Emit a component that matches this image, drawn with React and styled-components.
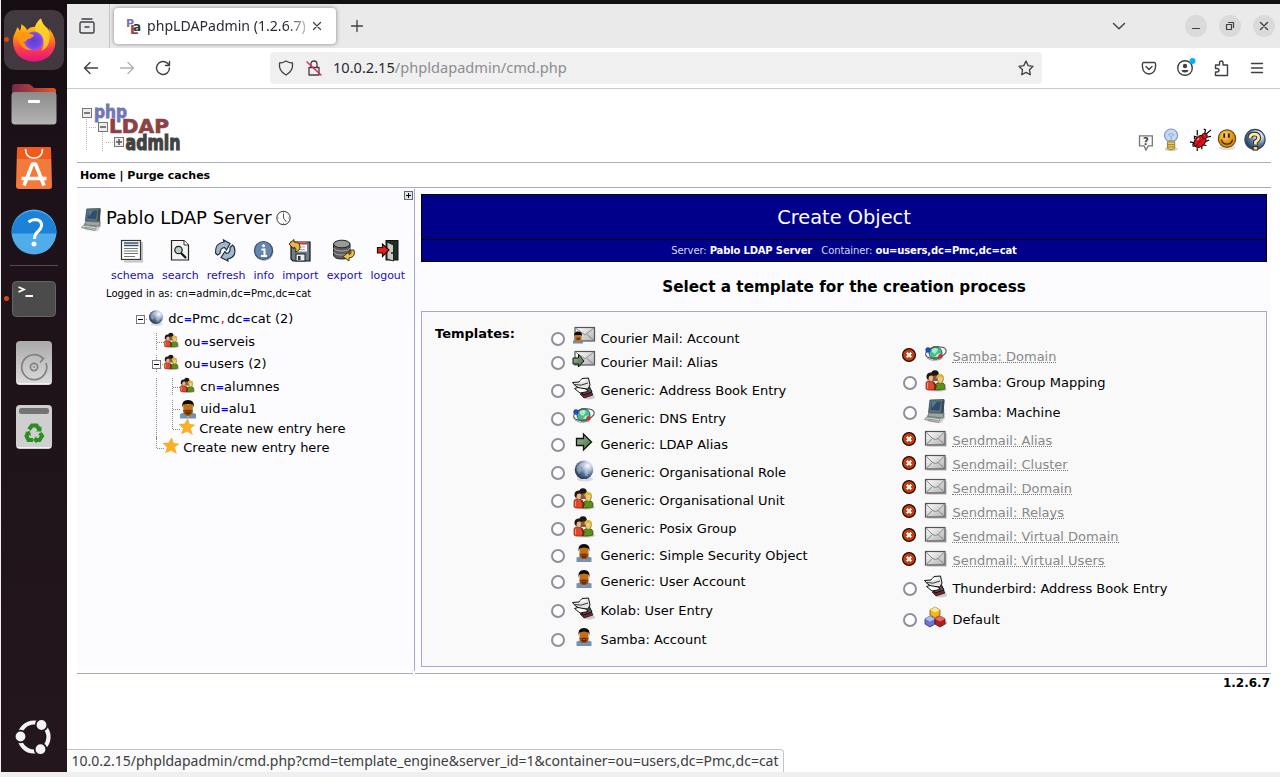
import React from 'react';
import styled, { createGlobalStyle } from 'styled-components';

const UI = '"Noto Sans", "Open Sans", sans-serif';
const LINE = '#a9a9cf';

const Global = createGlobalStyle`
  * { box-sizing: border-box; }
  body { margin: 0; background: #efefef; font-family: "DejaVu Sans", sans-serif; color: #000; overflow: hidden; }
  svg { display: block; flex: none; overflow: visible; }
`;

/* ---------- shell ---------- */
const Desktop = styled.div`
  width: 1280px; height: 777px; padding-left: 1px; background: #efefef;
`;
const Screen = styled.div`
  display: flex; height: 772px; background: #fff;
`;
const Dock = styled.nav`
  width: 66px; flex: none; display: flex; flex-direction: column; align-items: center;
  padding-top: 8px; background: linear-gradient(#160d13, #1d1219 25%, #23161d);
`;
const Slot = styled.div`
  position: relative; width: 66px; height: 64px; flex: none;
  display: flex; align-items: center; justify-content: center;
`;
const ActiveTile = styled.div`
  width: 60px; height: 60px; border-radius: 11px; background: #42383f;
  display: flex; align-items: center; justify-content: center;
`;
const RunDot = styled.i`
  position: absolute; left: 3px; top: 29px; width: 5px; height: 5px; border-radius: 50%; background: #d9480f;
`;
const DockRule = styled.div`width: 48px; height: 1px; margin: 1px 0; background: #56494f;`;
const DockEnd = styled.div`margin-top: auto; margin-bottom: 16px;`;

const Browser = styled.div`
  position: relative; flex: 1; min-width: 0; border-top: 4px solid #111013; background: #fff;
`;
const TabBar = styled.div`
  display: flex; align-items: center; height: 44px; background: #eaeaea; font-family: ${UI};
`;
const TabOverview = styled.div`
  width: 43px; height: 44px; border-right: 1px solid #c6c6c6; display: flex; align-items: center; padding-left: 12px;
`;
const Tab = styled.div`
  display: flex; align-items: center; width: 222px; height: 36px; margin-left: 3.5px; padding-left: 12px;
  background: #fff; border-radius: 4px; box-shadow: 0 0 4px rgba(0, 0, 0, .45);
`;
const TabTitle = styled.span`
  width: 158px; margin: 0 7px 0 6.5px; font-size: 14.1px; line-height: 20px; padding-bottom: 1px; white-space: nowrap; overflow: hidden; color: #2b2a33;
  mask-image: linear-gradient(90deg, #000 88%, rgba(0,0,0,.35));
`;
const NewTab = styled.div`margin-left: 15px;`;
const WindowControls = styled.div`
  margin-left: auto; display: flex; align-items: center; gap: 12px; padding-right: 5px;
`;
const ListTabs = styled.div`margin-right: 47px;`;
const RoundButton = styled.div`
  width: 22px; height: 22px; border-radius: 50%; background: #dadada;
  display: flex; align-items: center; justify-content: center;
`;
const NavBar = styled.div`
  display: flex; align-items: center; height: 41px; padding: 0 15px 1px 16px; border-bottom: 1px solid #c9c9c9; background: #fff;
`;
const NavButtons = styled.div`display: flex; gap: 20px; width: 187px;`;
const UrlBar = styled.div`
  display: flex; align-items: center; width: 772px; height: 32px; padding: 0 8px; background: #f0f0f0; border-radius: 4px;
`;
const Url = styled.span`
  margin-left: 11px; padding-bottom: 2px; flex: 1; font: 14.6px ${UI}; color: #8d8d93; white-space: nowrap;
  b { font-weight: 400; color: #2b2a33; }
`;
const UrlIcons = styled.div`display: flex; gap: 12px;`;
const ToolIcons = styled.div`margin-left: auto; display: flex; gap: 20px;`;
const StatusPopup = styled.div`
  position: absolute; left: 0; bottom: 0; width: 717px; height: 23px; padding-left: 4.5px;
  background: #fafafa; border: 1px solid #c4c4c4; border-width: 1px 1px 0 0; border-radius: 0 4px 0 0;
  font: 14px/22px ${UI}; color: #3d3d42; white-space: nowrap;
`;

/* ---------- phpLDAPadmin page ---------- */
const Page = styled.div`padding: 0 9px 0 10px;`;
const Header = styled.header`
  display: flex; justify-content: space-between; align-items: flex-start; height: 74px;
  padding: 13px 5.5px 0 4px; border-bottom: 1px solid ${LINE};
`;
const HeaderIcons = styled.div`display: flex; gap: 5.5px; margin-top: 27px;`;
const MenuBar = styled.div`
  height: 25px; padding-left: 3px; border-bottom: 1px solid ${LINE};
  font-weight: 700; font-size: 11px; line-height: 25px;
`;
const Main = styled.div`display: flex; height: 483px;`;
const TreePane = styled.aside`
  width: 338px; border-right: 1px solid ${LINE}; margin-top: 1px; background: #fcfcfe;
`;
const PaneToggle = styled.div`display: flex; justify-content: flex-end; padding: 2px 1px 0 0; height: 17px;`;
const ServerRow = styled.div`display: flex; align-items: center; height: 26px; padding-left: 4px;`;
const ServerName = styled.span`margin: -3px 4.500px 0 2px; font-size: 18px; line-height: 26px; white-space: nowrap;`;
const Actions = styled.div`display: flex; gap: 8.1px; padding-left: 34px; margin-top: 7px;`;
const Action = styled.a`
  display: flex; flex-direction: column; align-items: center; gap: 6px;
  font-size: 11px; line-height: 14px; color: #1b10b4;
  svg { margin: 0 -4px; }
`;
const LoggedIn = styled.div`padding-left: 29px; margin-top: 4px; font-size: 10px; line-height: 14px;`;
const Tree = styled.div`padding-left: 55px; margin-top: 9px;`;
const Node = styled.div`
  display: flex; height: 18px; margin-top: ${p => p.$gap}px; font-size: 13px; line-height: 18px; white-space: pre;
`;
const NodeIcon = styled.div`width: 17px; margin: -1px ${p => (p.$tight ? 3.3 : 4.3)}px 0 -1px;`;
const Eq = styled.b`font-size: 10px; color: #0000ff;`;
const Comma = styled.span`color: #f00; margin: 0 2px 0 1px;`;

const Content = styled.main`
  flex: 1; margin-top: 2px; padding: 4px 4px 0 6px; background: #fcfcfe;
`;
const TitleBlock = styled.div`border: 1px solid #000; background: #00008b; color: #fff; text-align: center;`;
const Title = styled.div`height: 45px; border-bottom: 1px solid #000; font-size: 19.4px; line-height: 45px;`;
const SubTitle = styled.div`
  height: 21px; font-size: 10px; line-height: 21px; white-space: pre; color: #d8d8f4; letter-spacing: -.1px;
  b { color: #fff; letter-spacing: -.16px; }
`;
const Heading = styled.h3`margin: 0; height: 49px; font-size: 15.25px; line-height: 51px; text-align: center;`;
const TemplateForm = styled.section`
  display: grid; grid-template-columns: 116px 352px 1fr; height: 356px; padding-left: 13px;
  border: 1px solid ${LINE}; background: #f9f9f9;
`;
const FormLabel = styled.b`padding-top: 12px; font-size: 13px; line-height: 20px;`;
const Option = styled.div`
  display: flex; align-items: flex-end; height: ${p => p.$h}px; font-size: 13px; line-height: 20px; white-space: nowrap;
`;
const Mark = styled.div`width: ${p => (p.$off ? 22 : 21)}px; margin: 0 0 ${p => (p.$off ? 5 : 3)}px ${p => (p.$off ? -1 : 0)}px;`;
const Radio = styled.div`width: 14px; height: 14px; border-radius: 50%; border: 2px solid #8f8f9d; background: #fff;`;
const OptionIcon = styled.div`width: 24px; height: 24px; margin: 0 4.4px 0 0;`;
const Disabled = styled.span`color: #888; line-height: 16px; margin-bottom: 4px; border-bottom: 1px dotted #777; height: 14px;`;
const FootLine = styled.div`
  display: flex; gap: 2px; height: 1px; margin-top: 2px;
  &::before { content: ''; width: 336px; background: ${LINE}; }
  &::after { content: ''; flex: 1; background: ${LINE}; }
`;
const Version = styled.div`padding-right: 1px; text-align: right; font-size: 12px; font-weight: 700; line-height: 18px;`;
const HiddenSvg = styled.svg`position: absolute;`;

/* ---------- shared gradients ---------- */
const Defs = () => (
  <HiddenSvg width="0" height="0">
    <defs>
      <linearGradient id="ff" x1="0" y1="0" x2="0" y2="1"><stop offset="0" stopColor="#ffe226" /><stop offset=".4" stopColor="#ff980e" /><stop offset=".7" stopColor="#ff3c4b" /><stop offset="1" stopColor="#e3147d" /></linearGradient>
      <radialGradient id="ffp"><stop offset="0" stopColor="#5b3fd0" /><stop offset=".7" stopColor="#7a45e8" /><stop offset="1" stopColor="#9059ff" /></radialGradient>
      <linearGradient id="grey" x1="0" y1="0" x2="0" y2="1"><stop offset="0" stopColor="#8b8b8b" /><stop offset="1" stopColor="#b5b5b5" /></linearGradient>
      <linearGradient id="fold" x1="0" y1="0" x2="1" y2="0"><stop offset="0" stopColor="#75284f" /><stop offset="1" stopColor="#e9541f" /></linearGradient>
      <linearGradient id="light" x1="0" y1="0" x2="0" y2="1"><stop offset="0" stopColor="#aaa" /><stop offset="1" stopColor="#dcdcdc" /></linearGradient>
      <radialGradient id="globe" cx=".7" cy=".28" r=".8"><stop offset="0" stopColor="#fff" /><stop offset=".3" stopColor="#b9c8de" /><stop offset=".6" stopColor="#5a7499" /><stop offset="1" stopColor="#243650" /></radialGradient>
      <linearGradient id="env" x1="0" y1="0" x2="1" y2="1"><stop offset="0" stopColor="#fff" /><stop offset="1" stopColor="#b0b0b0" /></linearGradient>
      <radialGradient id="smile" cx=".4" cy=".3"><stop offset="0" stopColor="#ffd75e" /><stop offset="1" stopColor="#d98a10" /></radialGradient>
      <linearGradient id="green" x1="0" y1="0" x2="1" y2="1"><stop offset="0" stopColor="#a5bd9e" /><stop offset="1" stopColor="#3e6a35" /></linearGradient>
    </defs>
  </HiddenSvg>
);

/* ---------- dock icons ---------- */
const Firefox = () => (
  <svg width="44" height="44" viewBox="0 0 44 44">
    <path d="M3 15 5.500 9 8 13Q10 7 9 6Q14 9 15 12Q19 8 24 9L23 9Q25 3 29 .500Q30 6 35 10Q37 12 38 14L37 10Q45 21 43 28Q39 43 22 43.500Q5 43 1.500 28Q0 20 3 15Z" fill="url(#ff)" />
    <circle cx="22" cy="23" r="9.500" fill="url(#ffp)" />
    <path d="M5 14Q13 13 15 15Q20 16 22 17Q21 20 16 21Q14 24 11 24Q14 30 20 32Q12 33 8 26Q5 20 5 14Z" fill="#ff980e" />
    <path d="M23 9Q25 3 29 .500Q30 6 35 10Q39 16 37 24Q35 31 29 33Q33 27 31 20Q29 15 23 13Z" fill="#ffd72e" opacity=".8" />
  </svg>
);
const Files = () => (
  <svg width="46" height="42" viewBox="0 0 46 42">
    <path d="M1 12V4Q1 1 4 1H17Q19 1 21 3L23 5H42Q45 5 45 8V16H1Z" fill="url(#fold)" />
    <rect x=".500" y="9" width="45" height="32.500" rx="3.500" fill="url(#grey)" />
    <rect x="17" y="17" width="12" height="3" rx="1" fill="#fff" />
  </svg>
);
const Software = () => (
  <svg width="36" height="42" viewBox="0 0 36 42">
    <path d="M3 0H33Q35 0 35 2L36 39Q36 42 33 42H3Q0 42 0 39L1 2Q1 0 3 0Z" fill="#f47a3c" />
    <path d="M3 0H33Q35 0 35 2V12H1V2Q1 0 3 0Z" fill="#f05a1c" />
    <path d="M9.500 2Q9.500 11 18 11Q26.500 11 26.500 2" fill="none" stroke="#fff" strokeWidth="1.600" />
    <path d="M8 38.500 16.500 17H19.500L28 38.500M5.500 31.500H30.500" fill="none" stroke="#fff" strokeWidth="3.600" strokeLinejoin="bevel" />
  </svg>
);
const Help = () => (
  <svg width="46" height="46" viewBox="0 0 46 46">
    <circle cx="23" cy="23" r="22.500" fill="#51ade9" />
    <path d="M.500 24.500A22.500 22.500 0 1 1 45.500 24.500Z" fill="#1c82d8" />
    <path d="M17.500 13Q21 10.500 24.500 10.500Q31 11 30.500 17Q30 20 26.500 23Q23.500 25.500 23.500 30" fill="none" stroke="#fff" strokeWidth="3" />
    <circle cx="23" cy="35" r="2.500" fill="#fff" />
  </svg>
);
const Terminal = () => (
  <svg width="44" height="36" viewBox="0 0 44 36">
    <rect x=".500" y=".500" width="43" height="35" rx="4" fill="#4b4b4b" stroke="#656565" />
    <path d="M6.500 6 12 8.500 6.500 11M13.500 15H21" fill="none" stroke="#fff" strokeWidth="1.800" />
  </svg>
);
const Disk = () => (
  <svg width="36" height="44" viewBox="0 0 36 44">
    <rect width="36" height="44" rx="4" fill="url(#light)" /><path d="M1 42.500H35" stroke="#f2f2f2" />
    <path d="M30 22A12.500 12.500 0 1 1 23.500 14.800L27.500 17.500L24 21.500" fill="none" stroke="#818181" strokeWidth="1.700" />
    <circle cx="18" cy="26" r="3.600" fill="none" stroke="#818181" strokeWidth="1.700" /><circle cx="18" cy="26" r=".9" fill="#818181" />
  </svg>
);
const Trash = () => (
  <svg width="36" height="44" viewBox="0 0 36 44">
    <rect width="36" height="44" rx="4" fill="#cfcfcf" /><path d="M1 42.500H35" stroke="#f2f2f2" />
    <rect x="3" y="3" width="30" height="6" rx="2.500" fill="#737373" />
    <g fill="none" stroke="#2b8e22" strokeWidth="4">
      <path d="M13 24.500 16 20.500H20.500L23 24" /><path d="M24 28 26 31 23.500 35H19" /><path d="M17 35H12.500L10.500 31 12 28" />
    </g>
    <path d="M25.500 21V26.500H20ZM20.500 31V38.500L17 35ZM9 27 14 26 15 31Z" fill="#2b8e22" />
  </svg>
);
const UbuntuLogo = () => (
  <svg width="38" height="38" viewBox="-19 -19 38 38">
    <circle r="14.500" fill="none" stroke="#f3f3f3" strokeWidth="4.200" />
    {[[-13.5, -0.5], [7.5, -12], [6.5, 12.2]].map(([x, y]) => <circle key={y} cx={x} cy={y} r="5.800" fill="#f3f3f3" stroke="#23161d" strokeWidth="1.800" />)}
  </svg>
);

/* ---------- browser icons ---------- */
const Stroke = ({ w = 16, d, c = '#3f3f46', sw = 1.4, children }) => (
  <svg width={w} height={w} viewBox={`0 0 ${w} ${w}`} fill="none" stroke={c} strokeWidth={sw} strokeLinecap="round" strokeLinejoin="round"><path d={d} />{children}</svg>
);
const Favicon = () => (
  <svg width="15" height="16" viewBox="0 0 15 16" fontFamily="DejaVu Sans" fontWeight="700">
    <text x="0" y="9" fontSize="11" fill="#7474ad">P</text><text x="4" y="16" fontSize="13" fill="#94464a">L</text><text x="7" y="13" fontSize="12" fill="#333">a</text>
  </svg>
);

/* ---------- page artwork ---------- */
const Box = ({ x, y, plus }) => (
  <g transform={`translate(${x} ${y})`}><rect x=".500" y=".500" width="9" height="9" fill="#eee" stroke="#777" /><path d={plus ? 'M2 5H8M5 2V8' : 'M2 5H8'} stroke="#555" strokeWidth="1.500" /></g>
);
const Logo = () => (
  <svg width="100" height="50" viewBox="0 0 100 50" fontFamily="DejaVu Sans" fontWeight="700">
    <path d="M5.500 17V49M21.500 30V49M8 25.500H16M25 40.500H33" stroke="#bbb" strokeDasharray="1 1" fill="none" />
    <Box x="1" y="6" /><Box x="17" y="20" /><Box x="33" y="35" plus />
    <text x="13" y="15.500" fontSize="17.500" fill="#7476b4" textLength="33" lengthAdjust="spacingAndGlyphs" stroke="#7476b4" strokeWidth=".8">php</text>
    <text x="28" y="31" fontSize="19.500" fill="#8d4144" textLength="60" lengthAdjust="spacingAndGlyphs" stroke="#8d4144" strokeWidth=".7">LDAP</text>
    <text x="44.500" y="48" fontSize="21.500" fill="#414141" textLength="55" lengthAdjust="spacingAndGlyphs" stroke="#414141" strokeWidth="1.200">admin</text>
  </svg>
);
const I = ({ s = 22, children }) => <svg width={s} height={s} viewBox="0 0 24 24">{children}</svg>;

const Bubble = () => (
  <I><path d="M6 7.500H20V18.500H15.500L13 23 11 18.500H6Z" fill="#fafafa" stroke="#777" strokeWidth="1.400" /><text x="9.800" y="17" fontSize="11" fontWeight="700" fill="#444" fontFamily="DejaVu Sans">?</text></I>
);
const Bulb = () => (
  <I><ellipse cx="11" cy="22" rx="7" ry="2" fill="#ccc" /><path d="M7 13Q2.500 9 4.500 4Q7 0 11 0Q15 0 17.500 4Q19.500 9 15 13Z" fill="#c7d8f2" stroke="#7b98cb" strokeWidth="1.300" /><path d="M11 13V9L8 6Q11 4 14 6L11 9" fill="none" stroke="#8fa4cc" /><path d="M7 14H15V21L12 22.500H10L7 21Z" fill="#e8c55e" stroke="#a07a22" /><path d="M7 17H15M7 19.500H15" stroke="#a07a22" /></I>
);
const Bug = () => (
  <I><path d="M1 14 5 15 4 18M4 19 8 18M9 24V21M14 22V17L19 18M6 11V8L9 9M9 7V1M17 6 18 1 16 0M18 6 24 1M19 9 24 8M17 14 22 12" fill="none" stroke="#000" strokeWidth="1.300" /><ellipse cx="12" cy="13.500" rx="7.500" ry="5.500" transform="rotate(-45 12 13.500)" fill="#df1014" stroke="#000" /><circle cx="17" cy="7.500" r="3" fill="#e01318" stroke="#000" strokeWidth=".8" /><path d="M7 19 16 9" stroke="#500" /><path d="M9 12 11 10" stroke="#ff8a8a" strokeWidth="1.500" /></I>
);
const Smiley = () => (
  <I><ellipse cx="12" cy="20.500" rx="9" ry="2.500" fill="#ddd" /><circle cx="12" cy="10.500" r="9.500" fill="url(#smile)" stroke="#6d470a" strokeWidth="1.200" /><path d="M9 5V9.500M14 5V9.500" stroke="#2b1b00" strokeWidth="2" /><path d="M6 11.500Q7 16.500 12 16.500Q17 16.500 18 11.500" fill="none" stroke="#3d2600" strokeWidth="1.400" /></I>
);
const HelpBall = () => (
  <I><circle cx="12" cy="11.500" r="11" fill="url(#globe)" stroke="#2f4860" strokeWidth="1.300" /><path d="M6.500 10Q6.500 5.500 11 5.500Q16 5.500 16 9.500Q16 12 12.500 14V17" fill="none" stroke="#222" strokeWidth="5" /><path d="M6.500 10Q6.500 5.500 11 5.500Q16 5.500 16 9.500Q16 12 12.500 14V17" fill="none" stroke="#ffe9a0" strokeWidth="3" /><rect x="10" y="19" width="5" height="4" fill="#f6d877" stroke="#222" /></I>
);
const Computer = ({ s = 24 }) => (
  <I s={s}><path d="M4 23 17 24 21 19 20 6Z" fill="#bcbcb6" opacity=".7" /><path d="M6 1 20 .500 19 14 4.500 13.500Z" fill="#5d727b" stroke="#3c4b51" strokeWidth=".8" /><path d="M7.500 3 17 2.500 15.500 11.500 6.500 11Z" fill="#2f4d6c" /><path d="M7.500 3 13 2.700 8 9Z" fill="#58789a" /><path d="M18 2 20.500 1 19.500 14 17 13.500Z" fill="#3b4a50" /><path d="M5 14 20 14.500 19 19 3.500 17.500Z" fill="#9aa7a7" stroke="#56635f" strokeWidth=".8" /><path d="M2.500 18 16 19.500 14.500 23.500 .500 20.500Z" fill="#d6dad3" stroke="#6f7a76" strokeWidth=".8" /><path d="M3 20 14 21.500" stroke="#87918c" /></I>
);
const Clock = () => (
  <svg width="15" height="15" viewBox="0 0 15 15"><circle cx="7.500" cy="6" r="6.700" fill="#fff" stroke="#333" /><path d="M7.500 1.500V6L10.500 10" fill="none" stroke="#555" /><path d="M7.500 0V1.500M7.500 10.500V12M1.500 6H3M12 6H13.500" stroke="#999" /></svg>
);
const Schema = () => (
  <I s={24}><path d="M4 22.500H22V3" stroke="#c4c4c4" strokeWidth="2" fill="none" /><rect x="1.500" y="1.500" width="19" height="19" fill="#fff" stroke="#333" strokeWidth="1.200" /><path d="M4 4H18.500M4 6.500H18.500" stroke="#37536e" strokeWidth="1.300" /><path d="M4 9.500H18M4 12H18M4 14.500H18M4 17.500H15" stroke="#777" /></I>
);
const Search = () => (
  <I s={24}><path d="M3.500 1.500H16L20.500 6V21H3.500Z" fill="#f3f3f1" stroke="#222" strokeWidth="1.200" /><path d="M16 1.500V6H20.500" fill="#fff" stroke="#333" /><circle cx="10.500" cy="11" r="3.700" fill="#b7d0c7" stroke="#222" strokeWidth="1.200" /><path d="M13 14 18 19" stroke="#111" strokeWidth="2.200" /></I>
);
const Refresh = () => (
  <I s={24}><path d="M1.500 14Q1 4 10 3L9.500 1 16 4.500 12.500 11 10.500 8.500Q6 9 6 14.500L3.500 16Z" fill="#a4b8cd" stroke="#1d2d3c" strokeWidth="1.200" /><path d="M20 7.500Q23.500 18 13.500 20L14 22 7 18.500 11 12.500 12.500 14.500Q16.500 14 16 8.500L18.500 6Z" fill="#a4b8cd" stroke="#1d2d3c" strokeWidth="1.200" /></I>
);
const Info = () => (
  <I s={24}><circle cx="12" cy="12.500" r="9.500" fill="#bbb" /><circle cx="11.500" cy="11.500" r="9" fill="#6486af" stroke="#3a4f6b" strokeWidth="1.200" /><path d="M9.500 10.500H12.500V16.500M9 17H15" stroke="#fff" strokeWidth="2" fill="none" /><circle cx="11.500" cy="6.800" r="1.500" fill="#fff" /></I>
);
const Import = () => (
  <I s={24}><path d="M3 3H22V22H5L3 20Z" fill="#6c7d8d" stroke="#111" strokeWidth="1.200" /><rect x="7" y="3.500" width="12" height="9" fill="#fff" /><path d="M7 4.500H19" stroke="#c33" strokeWidth="2" /><path d="M9 8H17M9 10.500H17" stroke="#aaa" /><rect x="8" y="15" width="9" height="7" fill="#eee" stroke="#222" /><rect x="10" y="17" width="2.500" height="4" fill="#334" /><path d="M1 5 6 .500V3Q12 3 12 8Q12 12 7 13Q9 9 6 8V10Z" fill="#eab544" stroke="#3b2a00" /></I>
);
const Export = () => (
  <I s={24}><path d="M1.500 5V16Q2 20 10 20Q18 20 18 16V5Z" fill="#5b5b5b" stroke="#222" /><path d="M1.500 9Q3 12 10 12Q17 12 18 9M1.500 13Q3 16 10 16Q17 16 18 13" fill="none" stroke="#aaa" /><ellipse cx="9.800" cy="5" rx="8.200" ry="3.800" fill="#999" stroke="#222" /><path d="M22 11Q24 18 17 19V22L11 17.500 17 13V15.500Q20 15 18.500 11Z" fill="#eebf50" stroke="#4b3600" /></I>
);
const Logout = () => (
  <I s={24}><rect x="10" y="1.500" width="12" height="19.500" fill="#1c3025" stroke="#111" /><path d="M11 3 17.500 6V22L11 20Z" fill="#c8cac4" stroke="#222" /><circle cx="16" cy="14" r="1" fill="#222" /><path d="M1.500 8.500H6.500V5L13 11 6.500 17.500V14H1.500Z" fill="#d8241f" stroke="#320000" strokeWidth="1.200" /></I>
);
const Globe = ({ s = 24 }) => (
  <I s={s}><ellipse cx="13" cy="20" rx="8" ry="2.500" fill="#ccc" opacity=".7" /><circle cx="12" cy="10.800" r="9.300" fill="url(#globe)" /><path d="M5 7Q8 3.500 11 4L11.500 6 8.500 8 9.500 12 7 15 4.500 11ZM12.500 12 17 12.500 15.500 17 13 17Z" fill="#e7eef5" opacity=".35" /></I>
);
const Group = ({ s = 24 }) => (
  <I s={s}>
    <ellipse cx="14" cy="20.500" rx="9" ry="2" fill="#ccc" />
    <circle cx="11" cy="5" r="3.800" fill="#181818" /><path d="M9 6.500H14V12H9Z" fill="#8a5a38" />
    <path d="M2 20V13.500Q3 11.500 6 12Q10.500 12 11 15V21H4Z" fill="#dc4a2b" stroke="#7e1d0c" strokeWidth=".7" />
    <path d="M3.500 7.500Q3.500 5 6.500 5Q9.500 5.500 9.500 8.500Q9.500 12 7 13Q4 12 3.500 7.500Z" fill="#e9b98c" stroke="#51301a" strokeWidth=".6" /><path d="M2.500 9Q2 3.800 6.500 3.600Q10 4 9.800 6.800Q6.500 5.800 5 7.500L4 11Z" fill="#24150d" />
    <path d="M11 21V16Q12 13.500 16 13.500Q20.500 13.500 21 16.500V20Q17 21.500 11 21Z" fill="#5d9016" stroke="#2b480a" strokeWidth=".7" />
    <path d="M13 9Q13 6.500 16 6.500Q19.500 6.500 19.500 9.500Q19 14 16.500 14.500Q13.500 14 13 9Z" fill="#efc87e" stroke="#6b5014" strokeWidth=".6" /><path d="M12.300 9.500Q12 5.200 16 5Q20.500 5.200 19.800 9.500L18.500 7.800 14.500 8Z" fill="#d9b730" />
    <path d="M3.500 14V19.500" stroke="#ff8d6d" /><path d="M9.500 13.500 12 17 10.500 21" stroke="#6c1f1c" strokeWidth="1.500" fill="none" />
  </I>
);
const User = ({ s = 24 }) => (
  <I s={s}><path d="M4.500 20V15.500Q7 14.500 9 14.500H15Q17 14.500 19.500 15.500V20Z" fill="#7391b4" /><path d="M8.500 15.500 12 18.500 15.500 15.500Z" fill="#b9cade" /><path d="M7.500 6H16.500V13Q16 17 12 17.500Q8 17 7.500 13Z" fill="#c46f14" /><path d="M6.500 9.500Q5.500 2 12 2Q18.500 2 17.500 9.500L16.500 6.500Q12 5 7.500 6.500Z" fill="#0d0a08" /><path d="M7.500 12 10 11.500H14L16.500 12Q16.500 16.500 12 17.500Q7.500 16.500 7.500 12Z" fill="#8d4c0c" /><rect x="10" y="12" width="4" height="3.500" fill="#542904" /><path d="M10.500 13.500H13.500" stroke="#b8691c" strokeWidth=".8" /></I>
);
const Envelope = () => (
  <I s={24}><path d="M3 19H22V6" stroke="#ccc" strokeWidth="1.600" fill="none" /><rect x="1.500" y="4.500" width="19.500" height="13.500" fill="url(#env)" stroke="#555" strokeWidth="1.200" /><path d="M2 5 8.500 11.500Q11.500 13.500 14 11.500L20.500 5M2 17.500 8.500 11.500M20.500 17.500 14 11.500" fill="none" stroke="#888" /></I>
);
const MailUser = () => (
  <I s={24}><rect x="3" y="2.500" width="19.500" height="13.500" fill="url(#env)" stroke="#555" strokeWidth="1.200" /><path d="M3.500 3 13 10 22 3M22 15.500 15 9.500" fill="none" stroke="#888" /><path d="M1 18.500V15.500H11V18.500Z" fill="#6c8cb0" /><rect x="3" y="8" width="6.500" height="8.500" rx="2" fill="#c77318" /><path d="M2 11Q2 6.500 6 6.500Q10.500 6.500 10 11L9 10H3Z" fill="#0d0a08" /><rect x="4.500" y="12.500" width="3.500" height="2.500" fill="#6d3b0b" /></I>
);
const MailArrow = () => (
  <I s={24}><rect x="3" y="2.500" width="19.500" height="13.500" fill="url(#env)" stroke="#555" strokeWidth="1.200" /><path d="M3.500 3 13 10 22 3M22 15.500 15 9.500" fill="none" stroke="#888" /><path d="M1 9H6.500V5.500L12 12 6.500 18V15H1Z" fill="url(#green)" stroke="#111" /></I>
);
const AddressBook = () => (
  <I s={24}><ellipse cx="17" cy="20" rx="6" ry="2.500" fill="#ccc" /><path d="M8 17 18 12 21 18 12 21Z" fill="#7c1f30" stroke="#222" strokeWidth=".8" /><path d="M9 12 17 9 20 15 11 18Z" fill="#555" stroke="#111" /><path d="M.500 5.500 7 5 10 1.500 16.500 1 18 8 16 12 8 11.500 3.500 9Z" fill="#e6e6e6" stroke="#111" /><path d="M2.500 7.500Q9 9.500 16 6" fill="none" stroke="#333" /><path d="M8 4.500 14 3" stroke="#fff" strokeWidth="1.500" fill="none" /><path d="M2.500 11.500 6 10.500 14 12 16 14.500 8 16Z" fill="#fff" stroke="#111" /></I>
);
const Network = () => (
  <I s={24}><circle cx="11.500" cy="10" r="6.500" fill="#52b98b" stroke="#1f6173" /><path d="M8 6Q12 3 14 7L11 11 8 9ZM13 11 16 10 14 15 11 14Z" fill="#9ff2c8" /><ellipse cx="12" cy="9.500" rx="10.500" ry="5.500" transform="rotate(-12 12 10)" fill="none" stroke="#555" strokeWidth="1.100" /><path d="M3 15Q8 19 17 16" fill="none" stroke="#999" /><circle cx="4" cy="7" r="2.400" fill="#1b50d2" stroke="#0c2b88" strokeWidth=".5" /><circle cx="16.500" cy="13.500" r="2.200" fill="#e02b2b" /></I>
);
const Arrow = () => (
  <I s={24}><path d="M4.500 7.500H11.500V3L19.500 11 11.500 19V14.500H4.500Z" fill="url(#green)" stroke="#111" strokeWidth="1.300" /></I>
);
const Cubes = () => (
  <I s={24}><path d="M15 21 23 18V15" fill="#bbb" /><path d="M11 1 16 4V9L11 12 6 9V4Z" fill="#f2b61c" stroke="#76550c" strokeWidth=".8" /><path d="M11 1 16 4 11 6.500 6 4Z" fill="#ffe78b" /><path d="M6 10 11 13V18L6 21 1 18V13Z" fill="#6974d4" stroke="#2c3178" strokeWidth=".8" /><path d="M6 10 11 13 6 15.500 1 13Z" fill="#b3baf6" /><path d="M16 10 21 13V18L16 21 11 18V13Z" fill="#b51b22" stroke="#630a0e" strokeWidth=".8" /><path d="M16 10 21 13 16 15.500 11 13Z" fill="#e66a6b" /></I>
);
const Star = () => (
  <I s={16}><path d="M13 0 15.500 8 23.500 9 17 14 20 23 12 18.500 4 22 6.500 14 0 8 8.500 7.500Z" fill="#fdb022" stroke="#eb9c10" strokeWidth=".8" /></I>
);
const Cross = () => (
  <svg width="14" height="14" viewBox="0 0 14 14"><circle cx="7" cy="7" r="6.400" fill="#c93c0d" stroke="#1c0a04" strokeWidth="1.200" /><path d="M4.800 4.800 9.200 9.200M9.200 4.800 4.800 9.200" stroke="#fff" strokeWidth="2.200" /></svg>
);

/* ---------- tree connectors ---------- */
const dots = { stroke: '#888', strokeDasharray: '1 1', fill: 'none' };
const Cell = ({ kind }) => (
  <svg width="16" height="18" viewBox="0 0 16 18" shapeRendering="crispEdges">
    {kind === 'line' && <path d="M8.500 0V20" {...dots} />}
    {kind === 'tee' && <path d="M8.500 0V18M8.500 9.500H16" {...dots} />}
    {kind === 'end' && <path d="M8.500 -2V9.500H16" {...dots} />}
    {(kind === 'root' || kind === 'minus') && <>
      {kind === 'minus' && <path d="M8.500 0V18" {...dots} />}
      <path d="M12 9.500H16" {...dots} />
      <rect x="4.500" y="5.500" width="8" height="8" fill="#fff" stroke="#777" /><path d="M6 9.500H11" stroke="#000" />
    </>}
  </svg>
);

const nodes = [
  [0, ['root'], <Globe s={18} />, <>dc<Eq>=</Eq>Pmc<Comma>,</Comma>dc<Eq>=</Eq>cat (2)</>],
  [5, ['', 'tee'], <Group s={17} />, <>ou<Eq>=</Eq>serveis</>],
  [4, ['', 'minus'], <Group s={17} />, <>ou<Eq>=</Eq>users (2)</>],
  [5, ['', 'line', 'tee'], <Group s={17} />, <>cn<Eq>=</Eq>alumnes</>],
  [4, ['', 'line', 'tee'], <svg width="17" height="19" viewBox="3.500 1 16 18.500" preserveAspectRatio="none"><User s={24} /></svg>, <>uid<Eq>=</Eq>alu1</>],
  [2, ['', 'line', 'end'], <Star />, 'Create new entry here', true],
  [1, ['', 'end'], <Star />, 'Create new entry here', true],
];

const leftOptions = [
  [37, MailUser, 'Courier Mail: Account'], [24, MailArrow, 'Courier Mail: Alias'],
  [28, AddressBook, 'Generic: Address Book Entry'], [28, Network, 'Generic: DNS Entry'],
  [26, Arrow, 'Generic: LDAP Alias'], [28, Globe, 'Generic: Organisational Role'],
  [28, Group, 'Generic: Organisational Unit'], [28, Group, 'Generic: Posix Group'],
  [27, User, 'Generic: Simple Security Object'], [26, User, 'Generic: User Account'],
  [29, AddressBook, 'Kolab: User Entry'], [29, User, 'Samba: Account'],
];
const rightOptions = [
  [55, Network, 'Samba: Domain', true], [26, Group, 'Samba: Group Mapping'], [30, Computer, 'Samba: Machine'],
  [28, Envelope, 'Sendmail: Alias', true], [24, Envelope, 'Sendmail: Cluster', true],
  [24, Envelope, 'Sendmail: Domain', true], [24, Envelope, 'Sendmail: Relays', true],
  [24, Envelope, 'Sendmail: Virtual Domain', true], [24, Envelope, 'Sendmail: Virtual Users', true],
  [28, AddressBook, 'Thunderbird: Address Book Entry'], [31, Cubes, 'Default'],
];
const actions = [[Schema, 'schema'], [Search, 'search'], [Refresh, 'refresh'], [Info, 'info'], [Import, 'import'], [Export, 'export'], [Logout, 'logout']];

const Options = ({ items }) => (
  <div>
    {items.map(([h, Icon, label, off]) => (
      <Option key={label} $h={h}>
        <Mark $off={off}>{off ? <Cross /> : <Radio />}</Mark>
        <OptionIcon><Icon /></OptionIcon>
        {off ? <Disabled>{label}</Disabled> : <span>{label}</span>}
      </Option>
    ))}
  </div>
);

export default function App() {
  return (
    <Desktop>
      <Global />
      <Defs />
      <Screen>
        <Dock>
          <Slot><ActiveTile><Firefox /></ActiveTile><RunDot /></Slot>
          <Slot><Files /></Slot>
          <Slot><Software /></Slot>
          <Slot><Help /></Slot>
          <DockRule />
          <Slot><Terminal /><RunDot /></Slot>
          <Slot><Disk /></Slot>
          <Slot><Trash /></Slot>
          <DockEnd><UbuntuLogo /></DockEnd>
        </Dock>
        <Browser>
          <TabBar>
            <TabOverview><Stroke d="M3 1H13M2.500 4H13.500Q15 4 15 5.500V13.500Q15 15 13.500 15H2.500Q1 15 1 13.500V5.500Q1 4 2.500 4ZM6 9H10" /></TabOverview>
            <Tab>
              <Favicon />
              <TabTitle>phpLDAPadmin (1.2.6.7)</TabTitle>
              <Stroke w={10} sw={1.2} d="M1.500 1.500 8.500 8.500M8.500 1.500 1.500 8.500" />
            </Tab>
            <NewTab><Stroke w={12} sw={1.3} d="M6 .500V11.500M.500 6H11.500" /></NewTab>
            <WindowControls>
              <ListTabs><Stroke w={14} d="M1.500 4.500 7 9.800 12.500 4.500" /></ListTabs>
              <RoundButton><Stroke w={10} sw={1.2} d="M1.500 7.500H8.500" /></RoundButton>
              <RoundButton><Stroke w={10} sw={1.2} d="M1.500 3.500H6.500V8.500H1.500ZM3.500 1.500H8.500V6.500" /></RoundButton>
              <RoundButton><Stroke w={10} sw={1.4} d="M1.500 1.500 8.500 8.500M8.500 1.500 1.500 8.500" /></RoundButton>
            </WindowControls>
          </TabBar>
          <NavBar>
            <NavButtons>
              <Stroke d="M14.500 8H1.500M7 2.500 1.500 8 7 13.500" />
              <Stroke c="#b3b3b6" d="M1.500 8H14.500M9 2.500 14.500 8 9 13.500" />
              <Stroke d="M14.500 8A6.500 6.500 0 1 1 12.500 3.300L14 5M14.500 1.500V5.500H10.500" />
            </NavButtons>
            <UrlBar>
              <UrlIcons>
                <Stroke sw={1.3} d="M8 1Q11 3 14.500 3Q15.500 11 8 15Q.500 11 1.500 3Q5 3 8 1Z" />
                <Stroke sw={1.3} d="M3 7.500H13V15H3ZM5 7.500V4Q5 1 8 1Q11 1 11 4V7.500"><path d="M1 2 15 15" stroke="#e22850" strokeWidth="1.500" /></Stroke>
              </UrlIcons>
              <Url><b>10.0.2.15</b>/phpldapadmin/cmd.php</Url>
              <Stroke sw={1.3} d="M8 1 10.200 5.600 15 6.300 11.500 9.800 12.300 14.800 8 12.400 3.700 14.800 4.500 9.800 1 6.300 5.800 5.600Z" />
            </UrlBar>
            <ToolIcons>
              <Stroke d="M2.500 2.500H13.500Q15 2.500 14.500 7Q14 13.500 8 14Q2 13.500 1.500 7Q1 2.500 2.500 2.500ZM5 6.500 8 9.500 11 6.500" />
              <Stroke d="M15.300 8A7.300 7.300 0 1 1 .700 8A7.300 7.300 0 0 1 15.300 8Z">
                <circle cx="8" cy="6" r="2.200" fill="#3f3f46" stroke="none" /><path d="M4.500 10H11.500Q11 12.500 8 12.500Q5 12.500 4.500 10Z" fill="#3f3f46" stroke="none" />
                <circle cx="15.500" cy="1" r="3" fill="#00b3f4" stroke="none" />
              </Stroke>
              <Stroke d="M2.500 5H6.500V3Q6.500 1 8.300 1Q10 1 10 3V5H14.500V15.500H2.500V12H4Q6 12 6 10.300Q6 8.500 4 8.500H2.500Z" />
              <Stroke d="M2.500 3.500H13.500M2.500 8H13.500M2.500 12.500H13.500" />
            </ToolIcons>
          </NavBar>

          <Page>
            <Header>
              <Logo />
              <HeaderIcons><Bubble /><Bulb /><Bug /><Smiley /><HelpBall /></HeaderIcons>
            </Header>
            <MenuBar>Home | Purge caches</MenuBar>
            <Main>
              <TreePane>
                <PaneToggle>
                  <svg width="9" height="9" viewBox="0 0 9 9"><rect x=".500" y=".500" width="8" height="8" fill="#dbe6e6" stroke="#667" /><path d="M2 4.500H7M4.500 2V7" stroke="#000" /></svg>
                </PaneToggle>
                <ServerRow><Computer s={23} /><ServerName>Pablo LDAP Server</ServerName><Clock /></ServerRow>
                <Actions>{actions.map(([Icon, label]) => <Action key={label}><Icon />{label}</Action>)}</Actions>
                <LoggedIn>Logged in as: cn=admin,dc=Pmc,dc=cat</LoggedIn>
                <Tree>
                  {nodes.map(([gap, cells, icon, label, tight], i) => (
                    <Node key={i} $gap={gap}>
                      {cells.map((kind, j) => <Cell key={j} kind={kind} />)}
                      <NodeIcon $tight={tight}>{icon}</NodeIcon>
                      <span>{label}</span>
                    </Node>
                  ))}
                </Tree>
              </TreePane>
              <Content>
                <TitleBlock>
                  <Title>Create Object</Title>
                  <SubTitle>Server: <b>Pablo LDAP Server</b>{'   '}Container: <b>ou=users,dc=Pmc,dc=cat</b></SubTitle>
                </TitleBlock>
                <Heading>Select a template for the creation process</Heading>
                <TemplateForm>
                  <FormLabel>Templates:</FormLabel>
                  <Options items={leftOptions} />
                  <Options items={rightOptions} />
                </TemplateForm>
              </Content>
            </Main>
            <FootLine />
            <Version>1.2.6.7</Version>
          </Page>
          <StatusPopup>10.0.2.15/phpldapadmin/cmd.php?cmd=template_engine&amp;server_id=1&amp;container=ou=users,dc=Pmc,dc=cat</StatusPopup>
        </Browser>
      </Screen>
    </Desktop>
  );
}
